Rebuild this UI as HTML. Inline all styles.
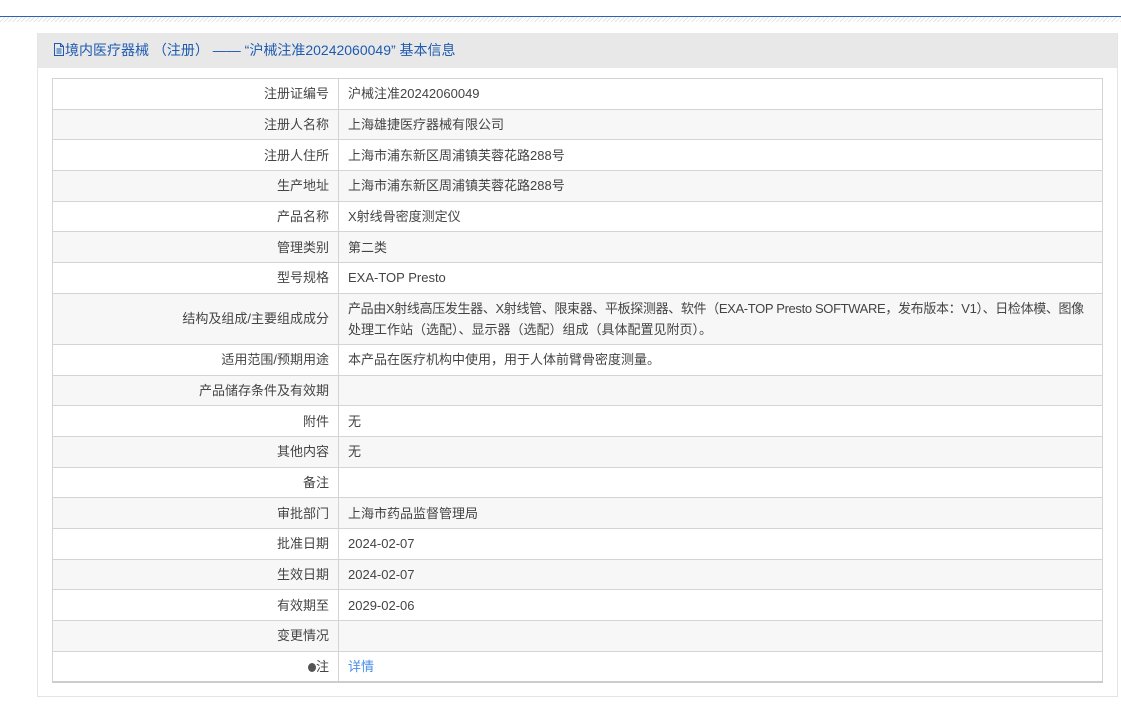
<!DOCTYPE html>
<html><head><meta charset="utf-8"><style>
body{margin:0;background:#fff;font-family:"Liberation Sans","Noto Sans CJK SC",sans-serif;width:1121px;height:709px;overflow:hidden;position:relative}
.topline{position:absolute;left:0;top:16px;width:1121px;height:1px;background:#2a62b8}
.hatch{position:absolute;left:0;top:17px;width:1121px;height:5px;background:repeating-linear-gradient(135deg,#e4e4e4 0 1px,#fff 1px 3px)}
.panel{position:absolute;left:37px;top:33px;width:1079px;height:663px;border:1px solid #e4e4e4;border-top:none}
.head{height:35px;background:#e8e8e8;color:#1e5bb0;font-size:14px;line-height:35px;padding-left:15px}
table{position:absolute;left:14px;top:45px;width:1051px;border-collapse:collapse;border:1px solid #d0d0d0;border-bottom:2px solid #ccc}
td{border:1px solid #d4d4d4;font-size:13px;color:#444;height:29.7px;padding:0 9px;line-height:21px}
td.l{width:267px;text-align:right}
tr:nth-child(even) td{background:#f7f7f7}
a{color:#4a8ee8;text-decoration:none}
</style></head><body>
<div class="topline"></div><div class="hatch"></div>
<div class="panel">
<div class="head"><svg width="12" height="13" viewBox="0 0 12 13" style="vertical-align:-1px"><path d="M1.5 0.5h6l3 3v9h-9z M7.5 0.5v3h3 M3.5 6h5 M3.5 8h5 M3.5 10h5" fill="none" stroke="#1e5bb0"/></svg>境内医疗器械 （注册） —— “沪械注准20242060049” 基本信息</div>
<table>
<tr><td class="l">注册证编号</td><td>沪械注准20242060049</td></tr>
<tr><td class="l">注册人名称</td><td>上海雄捷医疗器械有限公司</td></tr>
<tr><td class="l">注册人住所</td><td>上海市浦东新区周浦镇芙蓉花路288号</td></tr>
<tr><td class="l">生产地址</td><td>上海市浦东新区周浦镇芙蓉花路288号</td></tr>
<tr><td class="l">产品名称</td><td>X射线骨密度测定仪</td></tr>
<tr><td class="l">管理类别</td><td>第二类</td></tr>
<tr><td class="l">型号规格</td><td>EXA-TOP Presto</td></tr>
<tr><td class="l" style="height:50px">结构及组成/主要组成成分</td><td style="white-space:nowrap"><span style="letter-spacing:-0.35px">产品由X射线高压发生器、X射线管、限束器、平板探测器、软件（EXA-TOP Presto SOFTWARE，发布版本：V1）、日检体模、图像</span><br>处理工作站（选配）、显示器（选配）组成（具体配置见附页）。</td></tr>
<tr><td class="l">适用范围/预期用途</td><td>本产品在医疗机构中使用，用于人体前臂骨密度测量。</td></tr>
<tr><td class="l">产品储存条件及有效期</td><td></td></tr>
<tr><td class="l">附件</td><td>无</td></tr>
<tr><td class="l">其他内容</td><td>无</td></tr>
<tr><td class="l">备注</td><td></td></tr>
<tr><td class="l">审批部门</td><td>上海市药品监督管理局</td></tr>
<tr><td class="l">批准日期</td><td>2024-02-07</td></tr>
<tr><td class="l">生效日期</td><td>2024-02-07</td></tr>
<tr><td class="l">有效期至</td><td>2029-02-06</td></tr>
<tr><td class="l">变更情况</td><td></td></tr>
<tr><td class="l"><span style="display:inline-block;width:8px;height:9px;border-radius:50%;background:#555;vertical-align:-1px"></span>注</td><td><a>详情</a></td></tr>
</table>
</div>
</body></html>
